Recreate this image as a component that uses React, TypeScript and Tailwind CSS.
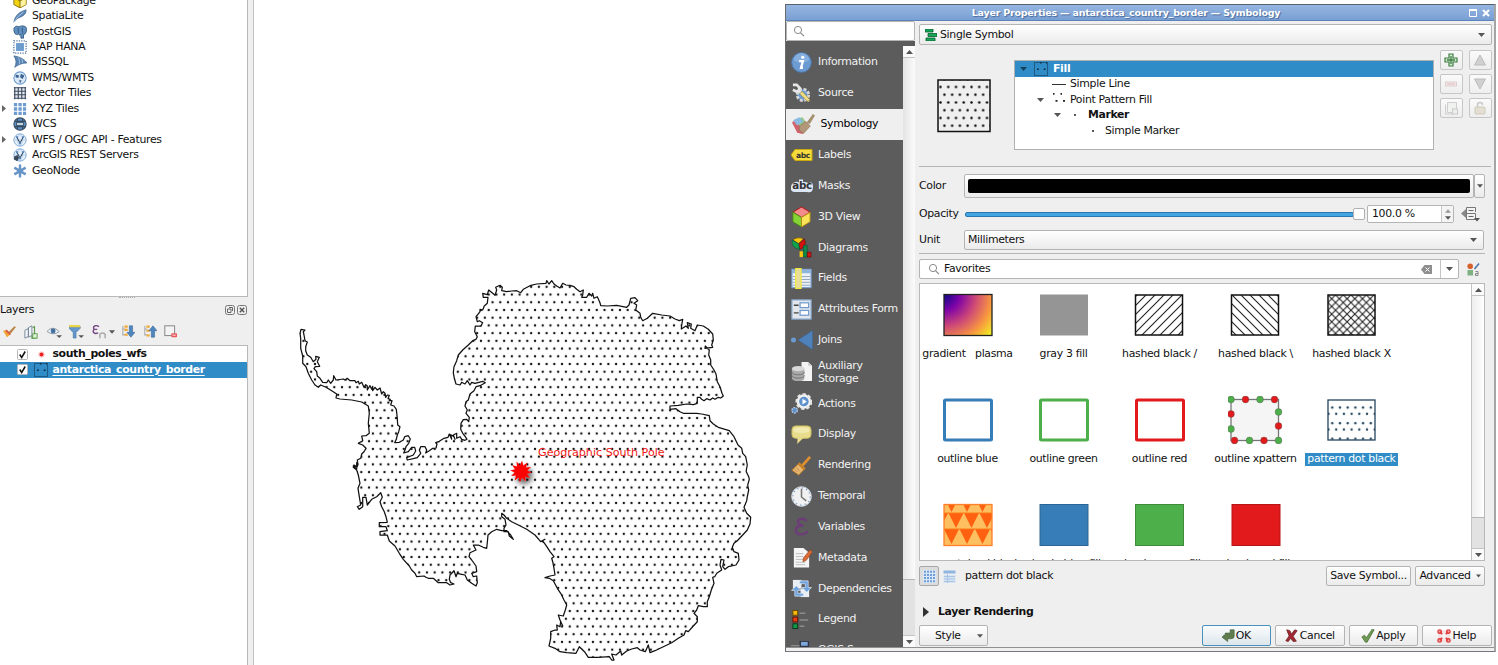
import React from "react";

/* ---------- map geometry ---------- */

const seg = (ox: number, oy: number, pts: string) =>
  pts
    .trim()
    .split(/\s+/)
    .map((p) => {
      const [x, y] = p.split(",").map(Number);
      return `${(ox + x / 3).toFixed(1)},${(oy + y / 3).toFixed(1)}`;
    })
    .join(" ");

const COAST = [
  seg(290, 270, `33,178 45,180 40,185 42,195 45,212 52,216 47,230 47,242 52,255 62,262 70,275 78,268 77,259 88,262 82,275 89,289 76,290 72,296 80,305 82,318 90,325 98,337 110,338 115,330 122,340 130,330 131,317 138,330 160,327 165,330 172,325 180,332 195,332 198,338 205,334 208,342 215,337 222,352 227,344 232,348 232,360 240,347 245,358 248,349 248,362 255,352 262,360 270,354 275,372 280,365 285,370 287,382 292,375 298,376 294,386 301,388 298,392 306,392 302,405 312,408 319,418 322,445 323,465 330,470 326,485 322,495 319,508 314,518 328,517 340,510 344,500 355,497 361,507 356,520 348,530 345,540 341,549 355,545 365,532 374,532 377,543 370,555 350,563 352,570 370,566 382,563 392,550 388,540 392,530 405,530 410,540 407,549 418,542 428,535 438,534 441,522 437,518 448,514 462,505 474,502 478,492 485,508 482,494 492,500 495,508 490,495 500,490 500,505 510,500 515,508 525,511 531,508 526,500 518,490 512,478 513,460 520,449 530,448 536,455 538,442 528,430 532,420 525,408 528,395 535,390 540,372 552,362 558,350 570,347 586,338 578,334 555,340 545,337 540,345 532,332 525,342 515,337 510,345 498,342 493,325 490,308 492,290 500,272 505,255 518,240 535,225 548,212 558,208 562,200 554,185 556,168 572,168 578,158 568,152 562,155 558,140 566,130 570,125 570,118 578,120 583,108 592,100 594,82 580,82 578,70 592,74 596,60 608,70 615,76 620,60 617,52 630,46 637,52 635,62 650,65 665,63 680,62 692,68 700,58`),
  seg(520, 270, `30,47 50,42 78,40 80,32 87,42 95,32 102,42 110,48 120,54 128,40 138,45 150,46 162,50 170,58 180,65 190,60 188,75 185,82 200,82 207,70 215,78 218,70 222,85 232,80 240,98 242,107 262,108 290,106 320,112 327,105 332,85 345,83 353,92 342,100 350,105 347,120 360,130 362,142 368,152 382,145 398,130 425,135 450,138 465,147 478,152 488,148 485,165 484,177 498,168 505,175 502,158 514,162 512,175 525,182 532,165 550,168 565,178 578,192 580,210 575,225 578,232 555,235 556,228 568,240 566,255 572,270 572,285 582,300 588,312 592,335 600,350 606,370 610,378 602,384 595,382 585,388 578,384 570,390 560,386 552,392 545,388 540,382 532,382 532,400 520,404 500,402 475,406 450,408 450,418 468,416 480,425 490,430 530,430 545,432 568,437 570,452 580,462 595,472 628,482 642,500 654,525 665,535 668,550 677,560 682,585 679,600`),
  seg(540, 460, `619,35 626,50 628,58 623,75 626,90 622,110 620,122 612,142 620,160 632,172 630,192 622,210 608,225 592,242 582,250 577,262 582,275 595,280 597,300 588,315 565,320 555,328 548,320 552,300 543,298 540,315 545,330 530,340 524,350 518,352 522,370 514,390 508,410 502,425 502,440 490,440 475,437 470,450 462,460 472,470 472,485 460,498 445,515 437,512 432,525 415,535 395,548 370,560 345,572 330,578 325,555 316,575 300,570 292,563 275,567 260,573 245,585 242,573 228,585 215,582 222,600 215,600 208,590 175,592 145,592 135,577 118,560 112,572 108,580 80,578 60,575 45,565 27,558 32,535 32,515 45,510 52,510 50,495 60,500 62,485 68,498 60,480 55,465 70,468 76,450 80,435 72,420 62,400 52,385 40,362 28,355 15,353 30,348 45,345 42,325 38,305 35,295 42,290 30,275 22,262 12,248 5,243`),
  seg(350, 460, `585,238 572,245 555,225 530,208 505,195 485,185 470,175 462,165 455,160 455,170 465,178 468,195 462,205 462,215 475,215 478,228 490,238 482,225 470,212 455,212 440,208 425,215 414,225 412,248 410,265 400,262 385,255 370,255 378,270 360,278 357,290 365,300 378,318 380,335 365,340 370,350 380,348 382,368 378,378 365,370 352,360 345,345 335,343 322,340 318,350 312,332 300,345 298,358 302,368 312,372 300,375 290,368 265,368 250,355 235,355 228,352 222,348 200,350 195,340 185,330 178,318 160,298 148,280 135,258 118,243 112,225 90,225 90,215 112,212 108,200 88,200 88,188 112,187 108,170 103,155 95,140 90,125 97,112 92,98 80,110 65,118 52,135 48,112 38,112 38,140 28,148 22,140 32,135 28,110 24,85 30,70 25,45 20,30 10,22 12,15 20,20 20,8`),
  seg(290, 270, `200,597 190,588 202,590 203,580 202,570 212,565 215,552 222,545 228,535 218,525 205,520 218,512 215,498 228,497 238,490 235,460 238,430 235,408 215,396 185,390 150,387 138,384 140,372 125,362 108,352 92,345 85,352 75,345 65,330 55,310 48,290 38,280 38,258 32,235 32,205 30,190`),
].join(" ");

const STAR = Array.from({ length: 24 }, (_, i) => {
  const r = i % 2 ? 6.4 : 11;
  const a = (i * Math.PI) / 12 + 0.1;
  return `${(521 + r * Math.sin(a)).toFixed(1)},${(471.5 - r * Math.cos(a)).toFixed(1)}`;
}).join(" ");

function MapCanvas() {
  return (
    <svg className="block h-[665px] w-[1244px] shrink-0" viewBox="254 0 1244 665">
      <defs>
        <pattern id="dots" x="546.6" y="460.5" width="7.72" height="15.44" patternUnits="userSpaceOnUse">
          <g fill="#141414">
            <circle cx="3.86" cy="3.86" r="1.22" />
            <circle cx="0" cy="11.58" r="1.22" />
            <circle cx="7.72" cy="11.58" r="1.22" />
          </g>
        </pattern>
        <filter id="sh" x="-50%" y="-50%" width="220%" height="220%">
          <feDropShadow dx="3" dy="4" stdDeviation="2.5" floodOpacity="0.6" />
        </filter>
      </defs>
      <polygon points={COAST} fill="url(#dots)" stroke="#111" strokeWidth="1.25" strokeLinejoin="round" />
      <polygon points={STAR} fill="#f00" filter="url(#sh)" />
      <text x="538" y="456" fontSize="11.15" letterSpacing="0" fill="#f01818" fontFamily="DejaVu Sans">
        Geographic South Pole
      </text>
    </svg>
  );
}

/* ---------- small shared pieces ---------- */

function I({ s = 14, v = 16, children, c = "" }: { s?: number; v?: number; children: React.ReactNode; c?: string }) {
  return (
    <svg width={s} height={s} viewBox={`0 0 ${v} ${v}`} className={`shrink-0 ${c}`}>
      {children}
    </svg>
  );
}

const Down = ({ c = "" }: { c?: string }) => (
  <svg width="7" height="4" viewBox="0 0 7 4" className={`shrink-0 ${c}`}>
    <path d="M0 0h7L3.5 4z" fill="#555" />
  </svg>
);

const Up = () => (
  <svg width="7" height="4" viewBox="0 0 7 4" className="shrink-0">
    <path d="M0 4h7L3.5 0z" fill="#555" />
  </svg>
);

const Search = () => (
  <I s={12} v={12} c="">
    <circle cx="5" cy="5" r="3.6" fill="none" stroke="#888" />
    <path d="M7.6 7.8l3.4 3.4" stroke="#888" strokeWidth="1.2" />
  </I>
);

const FillIcon = () => (
  <I s={14} v={14}>
    <rect x=".5" y=".5" width="13" height="13" fill="none" stroke="#1f5a84" />
    <path d="M3 7.2h1.700M9.800 7.2h1.700" stroke="#0d2636" strokeWidth="1.6" />
    <path d="M6 .8h1.5M12 .8h1" stroke="#0d2636" strokeWidth="1.2" />
  </I>
);

/* ---------- browser tree ---------- */

const blue = "#5b87b8";
const dark = "#34495e";

const Globe = ({ dk = false }: { dk?: boolean }) => (
  <I>
    <circle cx="8" cy="8" r="7" fill={dk ? "#5e8fc4" : "#dbe9f7"} stroke={dk ? dark : "#6d9bcf"} strokeWidth="1.2" />
    {dk ? (
      <path d="M2 5h12M2 11h12M5 2v3M11 2v3M5 11v3M11 11v3" stroke={dark} strokeWidth="1.3" />
    ) : (
      <path d="M3 4l4 1-1 3-3-1zM9 3l4 2-2 4-3-2zM7 10l3 1-2 3z" fill="#3b6391" />
    )}
    {dk && <rect x="4" y="6.5" width="8" height="3" fill="#dbe9f7" stroke={dark} />}
  </I>
);

const Nodes = ({ srv = false }: { srv?: boolean }) => (
  <I>
    <circle cx="8" cy="8" r="7" fill="#e8f1fa" stroke="#7aa6d6" strokeWidth="1.1" />
    <path d="M2 8h12M8 1q-6 7 0 14M8 1q6 7 0 14" fill="none" stroke="#9cc0e6" strokeWidth=".7" />
    <path d="M4.5 5L8 11.5 11.5 5" fill="none" stroke={dark} strokeWidth="1.2" />
    <circle cx="4.5" cy="4.8" r="1.3" fill="#5b87b8" />
    <circle cx="11.5" cy="4.8" r="1.3" fill="#5b87b8" />
    <circle cx="8" cy="11.8" r="1.3" fill="#5b87b8" />
    {srv && <path d="M1 10l4-2 2 3-2 4-4-2z" fill="#3c4b5c" />}
  </I>
);

const TREE: [string, React.ReactNode, boolean?][] = [
  ["GeoPackage", <I><path d="M1 4l7-3 7 3v8l-7 4-7-4z" fill="#f3d411" stroke="#7a6400" /><path d="M8 8v7.5l6.5-3.5V4.5z" fill="#fdf3a0" /><path d="M1 4l7 4 7-4M8 8v8" fill="none" stroke="#7a6400" /></I>],
  ["SpatiaLite", <I><path d="M1 15C2 8 7 3 15 1c0 3-1 5-4 7-2 1.500-6 2-7 4z" fill={blue} stroke="#3a5f8a" strokeWidth=".8" /><path d="M1 15Q5 8 12 3.500" fill="none" stroke="#b5cfe9" /></I>],
  ["PostGIS", <I><path d="M1 5c0-4 4-4 6-3 3-2 9-1 8.500 3 0 3-1.500 6-3.500 6v4H9v-4l-2 .5-.5-1.500C5 12 1 11 1 5z" fill="#5f8fbf" stroke="#34597f" /><path d="M6 3v6M11 3c-1 3 .5 5 0 7" fill="none" stroke="#34597f" /></I>],
  ["SAP HANA", <I><rect x="3.500" y="3.500" width="9" height="9" fill="#6d9ccf" /><rect x="1" y="1" width="14" height="14" fill="none" stroke="#476d96" strokeWidth="1.5" strokeDasharray="1.300 1.500" /></I>],
  ["MSSQL", <I><path d="M1 1c6 1 11 3 15 8-5 0-10 2-14 5 2-5 2-8-1-13z" fill={blue} stroke="#3a5f8a" strokeWidth=".8" /><path d="M6 3c2 3 2 5 1 8M10 4.500c1 2 1 3 .5 5" fill="none" stroke="#b5cfe9" strokeWidth=".9" /></I>],
  ["WMS/WMTS", <Globe />],
  ["Vector Tiles", <I><rect x="1.500" y="1.500" width="13" height="13" fill="#e4eaf1" /><path d="M2 1v14M6 1v14M10 1v14M14 1v14M1 2h14M1 6h14M1 10h14M1 14h14" stroke="#3d4b5b" strokeWidth="1.300" /></I>],
  ["XYZ Tiles", <I><path d="M1 3h14M1 8h14M1 13h14" stroke="#6d9ccf" strokeWidth="3.800" strokeDasharray="3.800 1.400" /></I>, true],
  ["WCS", <Globe dk />],
  ["WFS / OGC API - Features", <Nodes />, true],
  ["ArcGIS REST Servers", <Nodes srv />],
  ["GeoNode", <I><path d="M8 0.500v15M1.500 4.200l13 7.600M14.500 4.200l-13 7.600" stroke="#6794c6" strokeWidth="2.800" /><circle cx="8" cy="8" r="3" fill="#6794c6" /></I>],
];

function BrowserTree() {
  return (
    <div className="h-[297px] w-[248px] overflow-hidden border-r border-b border-[#b9b9b9] bg-white">
      <div className="-mt-[7px]">
        {TREE.map(([t, icon, exp]) => (
          <div key={t} className="flex h-[15.45px] items-center">
            <span className="w-[13px] shrink-0 pl-[2px]">
              {exp && (
                <svg width="4" height="7" viewBox="0 0 4 7">
                  <path d="M0 0v7l4-3.500z" fill="#666" />
                </svg>
              )}
            </span>
            {icon}
            <span className="pl-[5px] whitespace-nowrap">{t}</span>
          </div>
        ))}
      </div>
    </div>
  );
}

/* ---------- layers panel ---------- */

function LayersPanel() {
  return (
    <div className="flex flex-1 flex-col">
      <div className="flex h-[5px] items-start justify-center">
        <span className="w-[16px] border-t border-dotted border-[#aaa]" />
      </div>
      <div className="flex h-[16px] items-center pr-[6px]">
        <span className="flex-1">Layers</span>
        <I s={10} v={10} c="mr-[2px]">
          <rect x=".5" y=".5" width="9" height="9" rx="2" fill="none" stroke="#777" />
          <path d="M4 2.500h3.500V6M2.500 4h3.500v3.500H2.500z" fill="none" stroke="#666" />
        </I>
        <I s={10} v={10}>
          <rect x=".5" y=".5" width="9" height="9" rx="2" fill="none" stroke="#777" />
          <path d="M2.800 2.800l4.400 4.400M7.200 2.800L2.800 7.200" stroke="#555" strokeWidth="1.400" />
        </I>
      </div>
      <div className="flex h-[27px] items-center pl-[3px]">
        <I s={13} c="mr-[8px]">
          <path d="M0 7l5-1 5 5-5 4z" fill="#f0a733" /><path d="M3.500 6.500l5.500 5" stroke="#d9534f" strokeWidth="2.200" /><path d="M7 8.500l7-7 2 1-6.500 8z" fill="#b98545" />
        </I>
        <I s={14} c="mr-[9px]">
          <path d="M1 6l4-2v9l-4 2zM5 3l4-2v11l-4 2z" fill="#f2f6fa" stroke="#6f8094" /><path d="M10 3l2-1v8M9 12v3h4v-5" fill="none" stroke="#5c9a4c" strokeWidth="1.300" /><rect x="10" y="10" width="5" height="5" fill="#dff2d8" stroke="#4f9440" />
        </I>
        <I s={15} c="mr-[7px]">
          <path d="M0 8q6-7 13 0-6 5-13 0z" fill="#eef3f8" stroke="#8a97a5" /><circle cx="6.500" cy="7.500" r="2.600" fill="#45719f" /><path d="M10 12h6l-3 3z" fill="#555" />
        </I>
        <I s={15} c="mr-[8px]">
          <path d="M0 3h12v1.500L7.500 9v6h-3V9L0 4.500z" fill="#6497cc" stroke="#3f6b9c" strokeWidth=".6" /><rect x="0" y="1" width="12" height="2.500" fill="#e8d44d" /><path d="M10 12h6l-3 3z" fill="#555" />
        </I>
        <I s={14} c="mr-[3px]">
          <path d="M8 2C4-1 0 2 2.500 5 0 7 2 11 7 9M3 5h3" fill="none" stroke="#7a4a86" strokeWidth="1.700" /><path d="M9 15v-4.500q3.500-2.500 6 0V15" fill="none" stroke="#aaa" strokeWidth="1.700" />
        </I>
        <Down c="mr-[7px] w-[6px]" />
        <I s={13} c="mr-[9px]">
          <path d="M1 1v12M1 5h3M1 12h3" stroke="#999" fill="none" /><path d="M3 2h4M3 6h4M3 12h4" stroke="#f0a733" strokeWidth="2.500" /><path d="M9 1h4v8h3l-5 6-5-6h3z" fill="#4f86bd" stroke="#2f5c8c" strokeWidth=".6" />
        </I>
        <I s={13} c="mr-[8px]">
          <path d="M1 1v12M1 5h3M1 12h3" stroke="#999" fill="none" /><path d="M3 2h4M3 7h4M3 13h4" stroke="#f0a733" strokeWidth="2.500" /><path d="M9 15h4V7h3l-5-6-5 6h3z" fill="#4f86bd" stroke="#2f5c8c" strokeWidth=".6" />
        </I>
        <I s={13} c="-ml-[1px]">
          <rect x="1" y="1" width="12" height="12" fill="#f4f4f4" stroke="#8d8d8d" strokeWidth="1.300" /><rect x="9" y="10" width="7" height="5" rx="1" fill="#e9585a" /><path d="M10.500 12.500h4" stroke="#fff" />
        </I>
      </div>
      <div className="w-[248px] flex-1 border-t border-r border-[#b9b9b9] bg-white pt-[0.500px] font-bold tracking-[-0.370px]">
        <LayerRow label="south_poles_wfs" icon={<I s={14} v={14}><circle cx="7.500" cy="7.500" r="2" fill="#e22" /><circle cx="7.500" cy="7.500" r="3.200" fill="#e22" opacity=".2" /></I>} />
        <LayerRow label="antarctica_country_border" sel icon={<FillIcon />} />
      </div>
    </div>
  );
}

function LayerRow({ label, icon, sel = false }: { label: string; icon: React.ReactNode; sel?: boolean }) {
  return (
    <div className={sel ? "flex h-[15.500px] items-center bg-[#308cc6] pl-[17px] text-white" : "flex h-[15.500px] items-center pl-[17px]"}>
      <I s={11} v={11} c="mr-[6px]">
        <rect x=".5" y=".5" width="10" height="10" rx="1" fill="#fff" stroke="#b5b5b5" />
        <path d="M2.700 5.500l2 3L8.200 2.500" fill="none" stroke="#111" strokeWidth="1.500" />
      </I>
      {icon}
      <span className={sel ? "ml-[4.500px] underline underline-offset-[1.500px]" : "ml-[4.500px]"}>{label}</span>
    </div>
  );
}

/* ---------- dialog sidebar ---------- */

const Abc = ({ tag = false }: { tag?: boolean }) => (
  <svg width="22" height="22" viewBox="0 0 22 22" className="shrink-0">
    {tag ? <path d="M0 11l4-5.500h17v11H4z" fill="#f5dc3c" stroke="#c9a90b" /> : <path d="M3 7.500q3-1.500 5 0V4.500h4v2.500q5-.5 5 1.500 5-3 5 3.500t-6 5H3q-4-1-3-5 0-3 3-4.500z" fill="#dde6f5" />}
    <text x={tag ? 12 : 11} y="14.300" fontSize={tag ? 7.6 : 10.3} fontWeight="bold" fill="#333" textAnchor="middle" fontFamily="DejaVu Sans">abc</text>
  </svg>
);

const NAV: [string, React.ReactNode][] = [
  ["Information", <I s={21} v={22}><circle cx="11" cy="11" r="10.300" fill="#6c9bd2" stroke="#4c7ab0" /><path d="M3 9a8 8 0 0116 0q-8 4-16 0z" fill="#86afe0" /><circle cx="12.300" cy="5.500" r="1.700" fill="#fff" /><path d="M8.500 9.500h4l-2 7h2" fill="none" stroke="#fff" strokeWidth="2.400" /></I>],
  ["Source", <I s={21} v={22}><circle cx="12.500" cy="12.500" r="6" fill="#6c9bd2" stroke="#d5d5d5" strokeWidth="3" strokeDasharray="3 1.700" /><path d="M2 2l4 0 3 3-1 3L19 19M2 7l4 2 3-2" fill="none" stroke="#e6e6e6" strokeWidth="2.800" /><path d="M9 11l8 8 3-1-8-9z" fill="#f0dc82" stroke="#9c8838" strokeWidth=".7" /></I>],
  ["Symbology", <I s={23} v={22}><path d="M0 9l4-3 10 9-4 5-5-1z" fill="#d0626a" /><path d="M3 6l7-2 6 9-6 3z" fill="#8fc97d" /><path d="M1 7l6-3 4 4-6 4z" fill="#8bbbe4" /><path d="M7 13l6-5 4.500 4.500-6.500 7-4-3z" fill="#b3977a" stroke="#8d7255" strokeWidth=".6" /><path d="M14 9l6-8 2 1.500-5 8z" fill="#a4906f" /></I>],
  ["Labels", <Abc tag />],
  ["Masks", <Abc />],
  ["3D View", <I s={21} v={22}><path d="M11 1l9 5.500-9 5.500-9-5.500z" fill="#f28c8c" stroke="#b11" /><path d="M2 6.500l9 5.500v10l-9-5.500z" fill="#86d335" stroke="#4b8a12" /><path d="M20 6.500L11 12v10l9-5.500z" fill="#fbe35a" stroke="#b08d10" /></I>],
  ["Diagrams", <I s={21} v={22}><path d="M8 7L2 3a8 6 0 0111-1z" fill="#f9c80e" stroke="#5a4a00" strokeWidth=".6" /><path d="M8 7l6-5c2 4 1 9-5 11z" fill="#d31212" stroke="#600" strokeWidth=".6" /><path d="M8 7L1.500 3.500C0 8 3 12 9 13z" fill="#14a24a" stroke="#053" strokeWidth=".6" /><path d="M9 15h4v6H9z" fill="#f9c80e" /><path d="M13 9h4v12h-4z" fill="#0f8a47" stroke="#053" strokeWidth=".6" /><path d="M17 16h4v5h-4z" fill="#d31212" stroke="#600" strokeWidth=".6" /></I>],
  ["Fields", <I s={21} v={22}><rect x="1" y="1.500" width="20" height="19" fill="#eef2f7" stroke="#7aa0cc" strokeWidth="1.300" /><rect x="1" y="1.500" width="20" height="4" fill="#8fb4de" /><path d="M2 9h18M2 12h18M2 15h18M2 18h18" stroke="#8ea4bd" /><rect x="5" y="0.500" width="5.500" height="21" fill="#e9dd9b" stroke="#f4ea3c" strokeWidth="1.300" /></I>],
  ["Attributes Form", <I s={21} v={22}><rect x="1" y="1" width="20" height="20" fill="#e3e6ea" stroke="#8fb0d6" strokeWidth="1.300" /><path d="M3 6.500h5M3 14.500h5" stroke="#444" strokeWidth="1.500" /><rect x="9.500" y="4" width="9" height="5" fill="#fff" stroke="#6e9bd0" strokeWidth="1.300" /><rect x="9.500" y="12" width="9" height="5" fill="#fff" stroke="#6e9bd0" strokeWidth="1.300" /></I>],
  ["Joins", <I s={22} v={22}><circle cx="2.500" cy="11" r="2.500" fill="#6c9bd2" /><path d="M21.500 1.500v19L7 11z" fill="#4f82ba" stroke="#3c6796" strokeWidth=".6" /></I>],
  ["Auxiliary Storage", <I s={21} v={22}><path d="M11 1h7l4 4v16H11z" fill="#f3f3f3" /><path d="M18 1v4h4" fill="#ccc" /><path d="M1 8v10c0 4 13 4 13 0V8z" fill="#a9a9a9" /><ellipse cx="7.500" cy="8" rx="6.500" ry="2.800" fill="#d8d8d8" /><path d="M1 11.500c0 4 13 4 13 0M1 15c0 4 13 4 13 0" fill="none" stroke="#707070" /></I>],
  ["Actions", <I s={21} v={22}><circle cx="13.500" cy="9" r="7.600" fill="#f2f2f2" stroke="#e6e6e6" strokeWidth="2.500" strokeDasharray="3.500 2.200" /><circle cx="13.500" cy="9" r="5" fill="#5f92cd" /><path d="M12 6l4.500 3-4.500 3z" fill="#fff" /><circle cx="3.800" cy="18.200" r="2.900" fill="#5f92cd" stroke="#b8cbe0" strokeWidth="1.300" strokeDasharray="2 1" /></I>],
  ["Display", <I s={21} v={22}><rect x="1" y="2" width="20" height="13" rx="4" fill="#e8dd8d" stroke="#c8bb5a" /><path d="M7 14.500h6L6.500 21z" fill="#e8dd8d" /><path d="M3 4.500q8-2 16 0v4q-8 2-16 0z" fill="#f1e9ae" /></I>],
  ["Rendering", <I s={21} v={22}><path d="M19 1l2 2-8 9-2-2z" fill="#e0912f" /><path d="M9 8l6 6-7 7-7-5z" fill="#e9b873" stroke="#b3782c" /><path d="M8 9l6 6" stroke="#c98125" strokeWidth="2.500" /><path d="M4 15l3 3M6 13l3 4" stroke="#b3782c" strokeWidth=".7" /></I>],
  ["Temporal", <I s={21} v={22}><circle cx="11" cy="11" r="10.300" fill="#f1f1f1" stroke="#cfd6dd" /><circle cx="11" cy="11" r="9" fill="none" stroke="#7aa0cc" strokeWidth="1.500" strokeDasharray="1.200 3.510" /><path d="M11 3v8.500l5 4" fill="none" stroke="#777" strokeWidth="1.600" /></I>],
  ["Variables", <I s={21} v={22}><path d="M16.500 5C12 1 5 3.500 8 7.500q1.500 2.500 5 2.500Q5 10 5 15c1 6 9 5 13 1" fill="none" stroke="#6c3d78" strokeWidth="2.500" /></I>],
  ["Metadata", <I s={21} v={22}><path d="M3 1h10l6 5v15.500H3z" fill="#f5f5f5" /><path d="M5 7h8M5 10h8M5 13h9M5 16h10M5 18.500h10" stroke="#bbb" /><path d="M20 3l2.500 2-6.500 9-3.500 1.500.5-4z" fill="#dd6b35" stroke="#8c3a10" strokeWidth=".6" /></I>],
  ["Dependencies", <I s={21} v={22}><rect x="2" y="2" width="9" height="9" fill="#e9eef5" /><rect x="10" y="11" width="9" height="9" fill="#e9eef5" /><path d="M9 3h9v7h3.500l-5 5-5-5H15V6H9z" fill="#6fa3df" stroke="#e4edf8" strokeWidth=".7" /><path d="M13 19H4v-6H0.500l5-5 5 5H7v3h6z" fill="#6fa3df" stroke="#e4edf8" strokeWidth=".7" /></I>],
  ["Legend", <I s={21} v={22}><rect x="2" y="1.500" width="5" height="5" fill="#f9b90e" stroke="#6b4d00" /><rect x="2" y="8.500" width="5" height="5" fill="#ea3c12" stroke="#601000" /><rect x="2" y="15.500" width="5" height="5" fill="#14994a" stroke="#053818" /><path d="M9 4.500h6M9 11.500h9M9 18h5" stroke="#8c8c8c" strokeWidth="1.600" /></I>],
  ["QGIS Server", <I s={21} v={22}><rect x="9" y="1" width="10" height="14" fill="#2d3748" /><rect x="10.500" y="2" width="7" height="4" fill="#7fa8dd" /><path d="M0 6h9" stroke="#999" /></I>],
];

function ScrollEnd({ up = false }: { up?: boolean }) {
  return (
    <div className={up ? "flex h-[12px] shrink-0 items-center justify-center border-b border-[#c4c4c4] bg-[#fbfbfb]" : "flex h-[12px] shrink-0 items-center justify-center border-t border-[#c4c4c4] bg-[#fbfbfb]"}>
      {up ? <Up /> : <Down />}
    </div>
  );
}

function Sidebar() {
  return (
    <div className="flex w-[129px] shrink-0 flex-col">
      <div className="flex h-[20px] shrink-0 items-center rounded-[2px] border border-[#b5b5b5] bg-white pl-[6px]">
        <Search />
      </div>
      <div className="flex min-h-0 flex-1">
        <div className="w-[117px] shrink-0 overflow-hidden bg-[#5c5c5c] pt-[6px] text-[#f2f2f2]">
          {NAV.map(([t, icon]) => {
            const sel = t === "Symbology";
            const tall = t === "Auxiliary Storage";
            return (
              <div
                key={t}
                className={
                  sel
                    ? "flex h-[31px] items-center bg-[#efefef] pl-[6px] text-black"
                    : tall
                      ? "flex h-[32.500px] items-center pl-[4.500px]"
                      : "flex h-[30.850px] items-center pl-[4.500px]"
                }
              >
                <span className={sel ? "w-[28.500px] shrink-0" : "w-[27.500px] shrink-0"}>{icon}</span>
                <span className={tall ? "w-[60px] leading-[13px]" : "whitespace-nowrap"}>{t}</span>
              </div>
            );
          })}
        </div>
        <div className="flex w-[12px] flex-col bg-[#5c5c5c] pt-[5px]">
          <ScrollEnd up />
          <div className="flex-1 bg-gradient-to-r from-[#e4e4e4] to-[#fbfbfb]" />
          <div className="h-[56px] border-t border-[#b5b5b5] bg-[#e2e2e2]" />
          <ScrollEnd />
        </div>
      </div>
    </div>
  );
}

/* ---------- symbol editor ---------- */

const box = "flex items-center rounded-[2px] border border-[#b4b4b4] bg-gradient-to-b from-white to-[#ebebeb]";

const SYM_BTNS: React.ReactNode[] = [
  <I v={14}><path d="M5 1h4v4h4v4H9v4H5V9H1V5h4z" fill="#d3ecd0" stroke="#3f7d45" strokeWidth="1.200" /><path d="M7 3v8M3 7h8" stroke="#3f7d45" strokeWidth="1.300" /></I>,
  <I v={14}><path d="M1.500 12L7 2l5.500 10z" fill="#d0d0d0" stroke="#bcbcbc" /></I>,
  <I v={14}><rect x="1.500" y="5" width="11" height="4" fill="#f2e9e9" stroke="#ddd0d0" /><path d="M3 7h8" stroke="#e0b9b9" /></I>,
  <I v={14}><path d="M1.500 2L7 12l5.500-10z" fill="#d0d0d0" stroke="#bcbcbc" /></I>,
  <I v={14}><path d="M3.500 1.500h9v10h-9zM1.500 3.500v9.500h9" fill="#f1f1f1" stroke="#cfcfcf" /><rect x="8.500" y="8" width="5" height="5" fill="#eee" stroke="#c5cec2" /></I>,
  <I v={14}><path d="M4.500 6V4a2.500 2.500 0 015 0" fill="none" stroke="#c9c9c9" strokeWidth="1.500" /><rect x="2" y="6" width="10" height="7" rx="1" fill="#e4dfd2" stroke="#cfc9bb" /></I>,
];

function SymbolTree() {
  return (
    <div className="h-[90px] w-[419.500px] border border-[#b0b0b0] bg-white">
      <div className="flex h-[15.500px] items-center bg-[#308cc6] pl-[5px] font-bold text-white">
        <svg width="7" height="4" viewBox="0 0 7 4" className="mr-[7px]"><path d="M0 0h7L3.500 4z" fill="#12405f" /></svg>
        <FillIcon />
        <span className="pl-[5px]">Fill</span>
      </div>
      <div className="flex h-[15.500px] items-center pl-[37px]">
        <span className="h-[1.500px] w-[14px] bg-[#333]" />
        <span className="pl-[4px]">Simple Line</span>
      </div>
      <div className="flex h-[15.500px] items-center pl-[22px]">
        <Down c="mr-[8px]" />
        <I s={14} v={14}>
          <path d="M1 .8h1.500M8.500 .8h1.500M3.500 7.800h2M11 7.800h2" stroke="#222" strokeWidth="1.700" />
        </I>
        <span className="pl-[4px]">Point Pattern Fill</span>
      </div>
      <div className="flex h-[15.500px] items-center pl-[39px] font-bold">
        <Down c="mr-[13px]" />
        <span className="h-[2px] w-[2px] rounded-full bg-[#222]" />
        <span className="pl-[12px] tracking-[-0.370px]">Marker</span>
      </div>
      <div className="flex h-[15.500px] items-center pl-[77px]">
        <span className="h-[2px] w-[2px] rounded-full bg-[#222]" />
        <span className="pl-[11px]">Simple Marker</span>
      </div>
    </div>
  );
}

const TRIS: React.ReactNode[] = [];
for (let r = 0; r < 3; r++) {
  for (let c = -1; c < 5; c++) {
    const x = c * 15.5 + (r % 2 ? 4.5 : 0);
    const y = r * 16 - 7.5;
    TRIS.push(<path key={`${r}-${c}`} d={`M${x} ${y}h15L${x + 7.5} ${y + 15}z`} fill="#ff6110" />);
  }
}

const XDOTS: [number, number, string][] = [
  [4.5, 3.5, "g"], [19, 3.5, "r"], [33.500, 3.5, "g"], [48, 3.5, "r"],
  [52, 16, "g"], [52, 30, "r"], [52, 44.500, "g"],
  [37.500, 44.500, "r"], [23, 44.500, "g"], [8, 44.500, "r"], [4.5, 33, "g"], [4.5, 18, "r"],
];

const SYMBOLS: [string, React.ReactNode][] = [
  ["gradient   plasma", <rect x="4" y="3.500" width="48" height="41" fill="url(#plasma)" stroke="#222" strokeWidth="1.300" />],
  ["gray 3 fill", <rect x="4" y="3.500" width="48" height="41" fill="#959595" />],
  ["hashed black /", <rect x="3.500" y="4" width="47" height="40" fill="url(#h1)" stroke="#111" strokeWidth="1.500" />],
  ["hashed black \\", <rect x="3.500" y="4" width="47" height="40" fill="url(#h2)" stroke="#111" strokeWidth="1.500" />],
  ["hashed black X", <rect x="4" y="4" width="47" height="40" fill="url(#h3)" stroke="#111" strokeWidth="1.500" />],
  ["outline blue", <rect x="4.500" y="4" width="47" height="40" rx="1" fill="#fff" stroke="#377eb8" strokeWidth="3" />],
  ["outline green", <rect x="4.500" y="4" width="47" height="40" rx="1" fill="#fff" stroke="#4daf4a" strokeWidth="3" />],
  ["outline red", <rect x="4.500" y="4" width="47" height="40" rx="1" fill="#fff" stroke="#e31a1c" strokeWidth="3" />],
  ["outline xpattern", <g transform="translate(-1.500 0)"><rect x="4.500" y="3.500" width="47.500" height="41" fill="#f5f5f5" stroke="#777" strokeWidth="1.300" />{XDOTS.map(([x, y, c], i) => <circle key={i} cx={x} cy={y} r="3.400" fill={c === "g" ? "#4daf4a" : "#e31a1c"} stroke="#555" strokeWidth=".4" />)}</g>],
  ["pattern dot black", <rect x="4" y="4" width="47" height="40" fill="url(#sd)" stroke="#24445c" strokeWidth="1.300" />],
  ["orange  stained blocks", <><rect x="4" y="3.500" width="48" height="41" fill="#fdbf5f" /><svg x="4" y="3.500" width="48" height="41" viewBox="0 0 48 41">{TRIS}<path d="M0 8.500h48M0 24.500h48" stroke="#ff7a1a" /></svg><rect x="4" y="3.500" width="48" height="41" fill="none" stroke="#ff7f2a" strokeWidth="1.300" /></>],
  ["simple blue fill", <rect x="4" y="3.500" width="48" height="41" fill="#377eb8" stroke="#2b6596" />],
  ["simple green fill", <rect x="3.500" y="3.500" width="48" height="41" fill="#4daf4a" stroke="#3d8b3b" />],
  ["simple red fill", <rect x="4" y="3.500" width="48" height="41" fill="#e31a1c" stroke="#b51516" />],
];

function SymbolList() {
  return (
    <div className="mt-[4px] flex h-[278px] w-[566px] overflow-hidden border border-[#b9b9b9] bg-white">
      <svg className="absolute" width="0" height="0">
        <defs>
          <radialGradient id="plasma" gradientUnits="userSpaceOnUse" cx="4" cy="3.500" r="63">
            <stop offset="0" stopColor="#0d0887" /><stop offset=".25" stopColor="#7e03a8" /><stop offset=".5" stopColor="#cc4778" /><stop offset=".75" stopColor="#f89540" /><stop offset="1" stopColor="#f0f921" />
          </radialGradient>
          <pattern id="h1" width="9" height="9" patternUnits="userSpaceOnUse"><rect width="9" height="9" fill="#fff" /><path d="M-1 10L10-1M-1 1L1-1M8 10L10 8" stroke="#222" strokeWidth="1.100" /></pattern>
          <pattern id="h2" width="9" height="9" patternUnits="userSpaceOnUse"><rect width="9" height="9" fill="#fff" /><path d="M-1-1L10 10M8-1L10 1M-1 8L1 10" stroke="#222" strokeWidth="1.100" /></pattern>
          <pattern id="h3" width="7.700" height="7.700" patternUnits="userSpaceOnUse"><rect width="8" height="8" fill="#fff" /><path d="M-1-1L9 9M-1 8.700L8.700-1" stroke="#222" strokeWidth="1.100" /></pattern>
          <pattern id="sd" x="4.500" y="3.500" width="7.700" height="15.600" patternUnits="userSpaceOnUse"><circle cx="3.800" cy="8" r="1.200" fill="#24445c" /><circle cx="0" cy="14.400" r="1.200" fill="#24445c" /><circle cx="7.700" cy="14.400" r="1.200" fill="#24445c" /></pattern>
          <pattern id="pv" x="2" y="6.500" width="7.750" height="15.500" patternUnits="userSpaceOnUse"><circle cx="1.500" cy="1.500" r="1.200" /><circle cx="5.400" cy="9.250" r="1.200" /></pattern>
        </defs>
      </svg>
      <div className="grid flex-1 auto-rows-[105px] grid-cols-[repeat(5,96px)] content-start pt-[7px]">
        {SYMBOLS.map(([t, g]) => (
          <div key={t} className="flex flex-col items-center">
            <svg width="56" height="48" viewBox="0 0 56 48" className="-ml-[1px] shrink-0">{g}</svg>
            <span className={t === "pattern dot black" ? "mt-[9px] -ml-[1px] h-[13px] bg-[#308cc6] px-[2.500px] leading-[12px] whitespace-pre text-white" : "mt-[9px] -ml-[1px] h-[13px] leading-[12px] whitespace-pre"}>{t}</span>
          </div>
        ))}
      </div>
      <div className="flex w-[13px] flex-col border-l border-[#c4c4c4]">
        <ScrollEnd up />
        <div className="flex-1 bg-gradient-to-r from-[#eee] to-white" />
        <div className="h-[31px] border-t border-[#b5b5b5] bg-[#e2e2e2]" />
        <ScrollEnd />
      </div>
    </div>
  );
}

function Editor() {
  return (
    <div className="flex min-w-0 flex-1 flex-col bg-[#efefef] pt-[3px] pl-[4px]">
      <div className={`${box} h-[21px] w-[573px] pr-[6px] pl-[5px]`}>
        <I s={12} v={12}>
          <path d="M0 0h8v3H0zM3 4.500h9v3H3zM1 9h9v3H1z" fill="#14a75a" stroke="#0a5a30" strokeWidth=".8" />
        </I>
        <span className="flex-1 pl-[3px]">Single Symbol</span>
        <Down />
      </div>

      <div className="flex h-[122px] w-[572px] border-b border-[#b4b4b4]">
        <svg width="54" height="54" viewBox="0 0 54 54" className="mt-[34px] ml-[18px] shrink-0">
          <rect x="1" y="1" width="52" height="51.500" fill="url(#pv)" stroke="#111" strokeWidth="1.500" />
        </svg>
        <div className="mt-[15px] ml-[23px]"><SymbolTree /></div>
        <div className="mt-[5px] ml-[6px] grid auto-rows-[20px] grid-cols-[23px_23px] content-start gap-x-[6px] gap-y-[4px]">
          {SYM_BTNS.map((b, i) => (
            <div key={i} className="flex items-center justify-center rounded-[2px] border border-[#c6c6c6] bg-gradient-to-b from-[#fafafa] to-[#eee]">{b}</div>
          ))}
        </div>
      </div>

      <div className="mt-[7px] flex h-[24px] items-center">
        <span className="w-[45px]">Color</span>
        <div className={`${box} h-[24px] w-[510px] px-[3px]`}><div className="h-[14px] flex-1 rounded-[2px] bg-black" /></div>
        <div className={`${box} h-[24px] w-[11px] justify-center`}><Down c="w-[6px]" /></div>
      </div>
      <div className="mt-[7px] flex h-[18px] items-center">
        <span className="w-[46px]">Opacity</span>
        <div className="h-[5px] w-[389px] rounded-[2px] border border-[#2a78ad] bg-[#43a5e2]" />
        <div className="-ml-[1px] h-[12px] w-[12px] rounded-[2px] border border-[#b0b0b0] bg-white" />
        <div className="ml-[2px] flex h-[18px] w-[87px] rounded-[2px] border border-[#b4b4b4] bg-white">
          <span className="flex-1 pl-[4px] leading-[16px]">100.0 %</span>
          <span className="flex w-[12px] flex-col items-center justify-center gap-[3px] border-l border-[#c8c8c8] bg-[#f4f4f4]">
            <svg width="6" height="4" viewBox="0 0 7 4"><path d="M0 4h7L3.500 0z" fill="#999" /></svg>
            <svg width="6" height="4" viewBox="0 0 7 4"><path d="M0 0h7L3.500 4z" fill="#555" /></svg>
          </span>
        </div>
        <svg width="19" height="16" viewBox="0 0 19 16" className="ml-[7px]">
          <path d="M0 7.500L5 3v9z" fill="#888" /><path d="M5.500 1.500h9v4.500M5.500 1.500v12h9M5.500 7.500h9v6" fill="#f4f4f4" stroke="#777" /><path d="M7.500 4.500h5M7.500 10.500h5" stroke="#666" /><path d="M13 12h6l-3 3.500z" fill="#555" />
        </svg>
      </div>
      <div className="mt-[7px] flex h-[20px] items-center">
        <span className="w-[45px]">Unit</span>
        <div className={`${box} h-[20px] w-[520px] pr-[6px] pl-[3px]`}><span className="flex-1">Millimeters</span><Down /></div>
      </div>
      <div className="mt-[3px] w-[566px] border-t border-[#b4b4b4]" />
      <div className="mt-[5px] flex h-[20px] items-center">
        <div className="flex h-[20px] w-[540px] items-center rounded-[2px] border border-[#b4b4b4] bg-white">
          <span className="pl-[8px]"><Search /></span>
          <span className="flex-1 pl-[4px]">Favorites</span>
          <svg width="11" height="9" viewBox="0 0 11 9" className="mr-[8px]"><path d="M0 4.500L3.500 0H11v9H3.500z" fill="#8f8f8f" /><path d="M4.500 2.500l4 4M8.500 2.500l-4 4" stroke="#fff" /></svg>
          <span className="flex h-full w-[18px] items-center justify-center border-l border-[#c4c4c4]"><Down /></span>
        </div>
        <I s={13} v={13} c="ml-[8px]">
          <circle cx="3.200" cy="3.200" r="2.800" fill="#d5622c" /><rect x=".5" y="7" width="5.500" height="5.500" fill="#7fb07f" /><path d="M7.500 6L12 .5" stroke="#4573a8" strokeWidth="1.500" /><path d="M8.500 8.500h2.500v4H8.500v-2h2.500" fill="none" stroke="#888" />
        </I>
      </div>

      <SymbolList />

      <div className="mt-[5px] flex h-[20px] items-center">
        <div className="flex h-[20px] w-[20px] items-center justify-center rounded-[2px] border border-[#a8a8a8] bg-[#dcdcdc]">
          <I s={13} v={13}><rect width="13" height="13" fill="#d9e7f6" /><path d="M1 1.700h11M1 4.900h11M1 8.100h11M1 11.300h11" stroke="#6f9fd6" strokeWidth="2" strokeDasharray="2 1" /></I>
        </div>
        <I s={13} v={13} c="ml-[4px]"><rect x=".5" y=".5" width="12" height="3" fill="#8fb5e0" /><path d="M.5 5h12v8H.5z" fill="#d5e3f3" /><path d="M1 6.500h11M1 9h11M1 11.500h11M4.500 4v9" stroke="#a9c4e2" /></I>
        <span className="flex-1 pl-[9px]">pattern dot black</span>
        <div className={`${box} mr-[4px] h-[20px] w-[85px] justify-center whitespace-nowrap`}>Save Symbol...</div>
        <div className={`${box} mr-[9px] h-[20px] w-[70px] justify-center gap-[5px]`}>Advanced<Down c="w-[5px]" /></div>
      </div>

      <div className="mt-[18px] flex h-[15px] items-center pl-[4px] font-bold tracking-[-0.370px]">
        <svg width="6" height="10" viewBox="0 0 6 10"><path d="M0 0v10l6-5z" fill="#333" /></svg>
        <span className="pl-[9px]">Layer Rendering</span>
      </div>

      <div className="mt-[6px] flex h-[21px] gap-[4px]">
        <div className={`${box} w-[69px] justify-between pr-[4px] pl-[15px]`}>Style<Down c="w-[6px]" /></div>
        <div className="flex-1" />
        <div className="flex w-[69.500px] items-center justify-center gap-[1px] rounded-[2px] border border-[#4a90bd] bg-gradient-to-b from-[#fafcfd] to-[#dde6ec]">
          <I s={13}><path d="M4 8V5h6V1h5v8q0 3-4 3H7v3.500L0 10l3-3z" fill="#5f7d4c" stroke="#3b5532" strokeWidth=".7" /></I>OK
        </div>
        <div className={`${box} w-[69.500px] justify-center gap-[2px]`}>
          <I s={13}><path d="M2 1l4 1 2 4 4-5 3 1-5 7 4 6-4 .5-3-4-3 4-3-1 4-6z" fill="#a32a33" stroke="#5d1219" strokeWidth=".8" /></I>Cancel
        </div>
        <div className={`${box} w-[69.500px] justify-center gap-[1px]`}>
          <I><path d="M1 9l3-2 2 3 7-10 2 1-8 14H5z" fill="#6f9a55" stroke="#45692f" strokeWidth=".8" /></I>Apply
        </div>
        <div className={`${box} mr-[2.500px] w-[69.500px] justify-center gap-[1px]`}>
          <I s={14}><circle cx="8" cy="8" r="5" fill="none" stroke="#f2e2e2" strokeWidth="4" /><circle cx="3" cy="3" r="2" fill="#f9caca" stroke="#e23b3b" strokeWidth="1.600" /><circle cx="13" cy="3" r="2" fill="#f9caca" stroke="#e23b3b" strokeWidth="1.600" /><circle cx="3" cy="13" r="2" fill="#f9caca" stroke="#e23b3b" strokeWidth="1.600" /><circle cx="13" cy="13" r="2" fill="#f9caca" stroke="#e23b3b" strokeWidth="1.600" /><path d="M3 3l3 3M13 3l-3 3M3 13l3-3M13 13l-3-3" stroke="#e23b3b" strokeWidth="1.800" /></I>Help
        </div>
      </div>
    </div>
  );
}

function Dialog() {
  return (
    <div className="absolute top-[4px] left-[785px] flex h-[648px] w-[711px] flex-col border-t border-r-2 border-b border-l border-t-[#5a5f68] border-r-[#a5a5a5] border-b-[#77777f] border-l-[#6b6b6b] bg-[#efefef]">
      <div className="flex h-[16px] shrink-0 items-center border-b border-[#5c83bb] bg-gradient-to-b from-[#96b6e2] to-[#799fd2] pr-[4px] font-bold text-white">
        <span className="flex-1 pr-[3px] text-center text-[9.500px] tracking-[-0.220px] [text-shadow:1px_1px_1px_#4a6a9c]">Layer Properties — antarctica_country_border — Symbology</span>
        <I s={8} v={8} c="mr-[5px]"><path d="M.5 1h7v6.500h-7z" fill="none" stroke="#fff" /><path d="M0 1h8" stroke="#fff" strokeWidth="2" /></I>
        <I s={8} v={8}><path d="M1 1l6 6M7 1L1 7" stroke="#fff" strokeWidth="2" /></I>
      </div>
      <div className="flex min-h-0 flex-1">
        <Sidebar />
        <Editor />
      </div>
      <div className="h-[4px] shrink-0 border-t border-[#909090] bg-[#efefef]" />
    </div>
  );
}

export default function App() {
  return (
    <div className="relative flex h-[665px] w-[1498px] overflow-hidden bg-white text-[10.900px] leading-[14px] tracking-[-0.320px] text-[#111] [font-family:'DejaVu_Sans',sans-serif]">
      <div className="flex w-[254px] shrink-0 flex-col border-r border-[#c2c2c2] bg-[#efefef]">
        <BrowserTree />
        <LayersPanel />
      </div>
      <MapCanvas />
      <Dialog />
    </div>
  );
}
